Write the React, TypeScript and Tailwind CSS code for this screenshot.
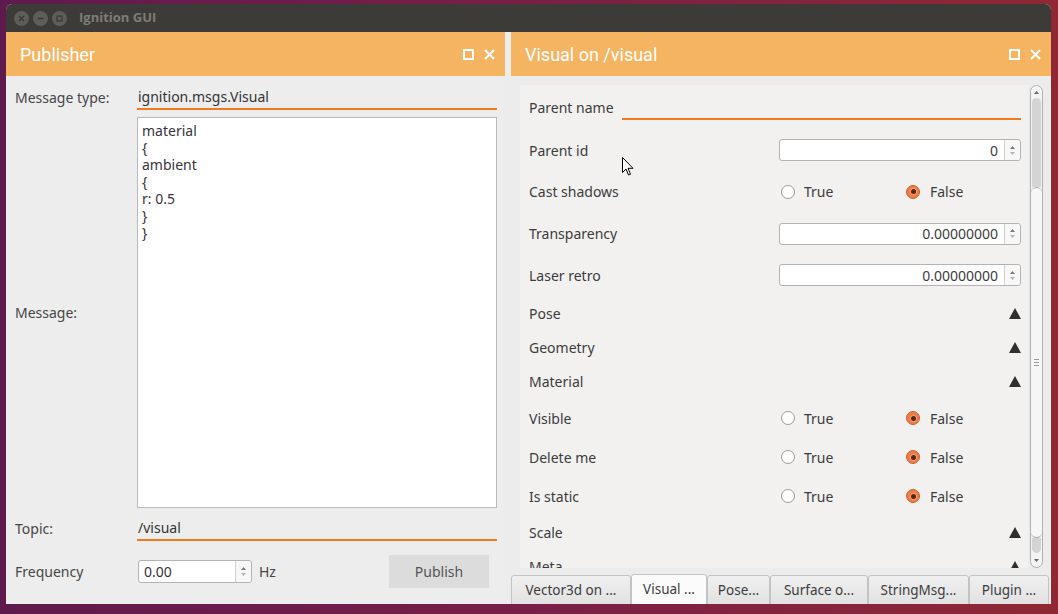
import React from "react";

const ORANGE_LINE = "border-[#f07a1c]";

function SpinArrows({ w = 16 }: { w?: number }) {
  return (
    <div
      className="flex flex-col items-center justify-center gap-[3px] border-l border-[#d0d0d0] h-full bg-[#f7f7f7] rounded-r-[3px]"
      style={{ width: w }}
    >
      <svg width="5" height="3" viewBox="0 0 5 3">
        <path d="M0 3 L2.5 0 L5 3 Z" fill="#7a7a7a" />
      </svg>
      <svg width="5" height="3" viewBox="0 0 5 3">
        <path d="M0 0 L2.5 3 L5 0 Z" fill="#b5b5b5" />
      </svg>
    </div>
  );
}

function SpinBox({ value }: { value: string }) {
  return (
    <div className="flex w-[242px] h-[22px] bg-white border border-[#b3b3b3] rounded-[3px]">
      <div className="flex-1 flex items-center justify-end pr-[6px] text-[14px] text-[#3c3c3c]">
        {value}
      </div>
      <SpinArrows />
    </div>
  );
}

function Radio({ checked }: { checked?: boolean }) {
  if (checked) {
    return (
      <div className="w-[14px] h-[14px] rounded-full bg-[#ef7b47] border border-[#d2622f] flex items-center justify-center">
        <div className="w-[7px] h-[7px] rounded-full bg-[#f5a07a] flex items-center justify-center">
          <div className="w-[5px] h-[5px] rounded-full bg-[#5b2516]" />
        </div>
      </div>
    );
  }
  return <div className="w-[14px] h-[14px] rounded-full bg-white border border-[#9c9c9c]" />;
}

function RadioPair() {
  return (
    <div className="grid grid-cols-[125px_117px] ml-[2px] text-[14px] text-[#3c3c3c]">
      <div className="flex items-center gap-[9px]">
        <Radio />
        <span>True</span>
      </div>
      <div className="flex items-center gap-[10px]">
        <Radio checked />
        <span>False</span>
      </div>
    </div>
  );
}

function Triangle() {
  return (
    <svg width="12" height="11" viewBox="0 0 12 11" className="ml-auto mr-[7px]">
      <path d="M6 0 L12 11 L0 11 Z" fill="#2f2f2f" />
    </svg>
  );
}

function Row({
  h,
  label,
  children,
}: {
  h: number;
  label: string;
  children?: React.ReactNode;
}) {
  return (
    <div className="flex items-center pl-[9px] shrink-0" style={{ height: h }}>
      <div className="w-[250px] shrink-0 text-[14px] text-[#3c3c3c]">{label}</div>
      {children}
    </div>
  );
}

function HeaderIcons() {
  return (
    <div className="flex items-center gap-[10px] ml-auto mr-[10px]">
      <div className="w-[11px] h-[11px] border-2 border-white" />
      <svg width="11" height="11" viewBox="0 0 11 11">
        <path d="M1 1 L10 10 M10 1 L1 10" stroke="white" strokeWidth="2" />
      </svg>
    </div>
  );
}

function TitleButton({ glyph }: { glyph: "x" | "-" | "o" }) {
  return (
    <div className="w-[15px] h-[15px] rounded-full bg-[#5e5d58] flex items-center justify-center">
      <svg width="7" height="7" viewBox="0 0 7 7">
        {glyph === "x" && <path d="M1 1 L6 6 M6 1 L1 6" stroke="#3a3935" strokeWidth="1.4" />}
        {glyph === "-" && <path d="M0.5 3.5 L6.5 3.5" stroke="#3a3935" strokeWidth="1.4" />}
        {glyph === "o" && <rect x="1" y="1" width="5" height="5" fill="none" stroke="#3a3935" strokeWidth="1.2" />}
      </svg>
    </div>
  );
}

function Tab({ w, label, selected }: { w: number; label: string; selected?: boolean }) {
  return (
    <div
      className={
        selected
          ? "h-[31px] -mt-[1px] flex items-center justify-center border border-[#c3c3c3] rounded-t-[3px] bg-[#fbfbfb] text-[13.5px] text-[#3c3c3c]"
          : "h-[30px] flex items-center justify-center border border-[#c3c3c3] rounded-t-[3px] bg-gradient-to-b from-[#f0f0f0] to-[#e2e2e2] text-[13.5px] text-[#3c3c3c]"
      }
      style={{ width: w }}
    >
      {label}
    </div>
  );
}

export default function App() {
  const code = ["material", "{", "ambient", "{", "r: 0.5", "}", "}"];
  return (
    <div className="relative w-[1058px] h-[614px] overflow-hidden bg-gradient-to-r from-[#5f1a4d] via-[#791f46] to-[#8f2834] font-['Noto_Sans',sans-serif]">
      <div className="pt-[4px] pl-[6px]">
        <div className="w-[1045px] h-[600px] flex flex-col bg-[#ececec] rounded-t-[6px] overflow-hidden">
          {/* Title bar */}
          <div className="h-[28px] shrink-0 bg-[#3c3b37] flex items-center pl-[8px]">
            <div className="flex items-center gap-[4px]">
              <TitleButton glyph="x" />
              <TitleButton glyph="-" />
              <TitleButton glyph="o" />
            </div>
            <div className="ml-[12px] text-[13px] font-bold text-[#7f7c77] font-['Open_Sans',sans-serif]">
              Ignition GUI
            </div>
          </div>

          <div className="flex flex-1 gap-[6px]">
            {/* Left panel: Publisher */}
            <div className="w-[499px] flex flex-col">
              <div className="h-[44px] bg-[#f5b462] flex items-center pl-[14px]">
                <span className="text-[18px] text-white font-['Roboto',sans-serif]">Publisher</span>
                <HeaderIcons />
              </div>
              <div className="flex-1 flex flex-col pt-[9px] pl-[9px] pr-[8px] bg-[#ededed]">
                <div className="flex h-[25px]">
                  <div className="w-[122px] flex items-center text-[14px] text-[#464646]">
                    Message type:
                  </div>
                  <div className={`flex-1 flex items-center pl-[1px] border-b-2 ${ORANGE_LINE} text-[14px] text-[#333]`}>
                    ignition.msgs.Visual
                  </div>
                </div>
                <div className="flex mt-[7px] h-[391px]">
                  <div className="w-[122px] flex items-center text-[14px] text-[#464646]">Message:</div>
                  <div className="flex-1 bg-white border border-[#b9b9b9] pt-[4px] pl-[4px] text-[14px] leading-[17px] text-[#38353b]">
                    {code.map((l, i) => (
                      <div key={i}>{l}</div>
                    ))}
                  </div>
                </div>
                <div className="flex mt-[8px] h-[25px]">
                  <div className="w-[122px] flex items-center text-[14px] text-[#464646]">Topic:</div>
                  <div className={`flex-1 flex items-center pl-[1px] border-b-2 ${ORANGE_LINE} text-[14px] text-[#333]`}>
                    /visual
                  </div>
                </div>
                <div className="flex mt-[14px] h-[33px] items-center">
                  <div className="w-[123px] text-[14px] text-[#464646]">Frequency</div>
                  <div className="flex w-[114px] h-[23px] bg-white border border-[#b3b3b3] rounded-[3px]">
                    <div className="flex-1 flex items-center pl-[5px] text-[14px] text-[#333]">0.00</div>
                    <SpinArrows />
                  </div>
                  <span className="ml-[7px] text-[14px] text-[#464646]">Hz</span>
                  <div className="ml-[113px] w-[100px] h-[33px] bg-[#dcdcdc] flex items-center justify-center text-[14px] text-[#555]">
                    Publish
                  </div>
                </div>
              </div>
            </div>

            {/* Right panel */}
            <div className="flex-1 flex flex-col">
              <div className="h-[44px] bg-[#f5b462] flex items-center pl-[14px]">
                <span className="text-[18px] text-white font-['Roboto',sans-serif]">Visual on /visual</span>
                <HeaderIcons />
              </div>
              <div className="flex-1 flex flex-col pt-[9px]">
                <div className="flex h-[483px] pl-[9px]">
                  <div className="w-[508px] bg-[#f2f1f0] flex flex-col overflow-hidden">
                    <Row h={44} label="Parent name">
                      <div className={`-ml-[157px] flex-1 mr-[7px] h-[24px] mt-[2px] border-b-2 ${ORANGE_LINE}`} />
                    </Row>
                    <Row h={42} label="Parent id">
                      <SpinBox value="0" />
                    </Row>
                    <Row h={41} label="Cast shadows">
                      <RadioPair />
                    </Row>
                    <Row h={43} label="Transparency">
                      <SpinBox value="0.00000000" />
                    </Row>
                    <Row h={40} label="Laser retro">
                      <SpinBox value="0.00000000" />
                    </Row>
                    <Row h={36} label="Pose">
                      <Triangle />
                    </Row>
                    <Row h={33} label="Geometry">
                      <Triangle />
                    </Row>
                    <Row h={35} label="Material">
                      <Triangle />
                    </Row>
                    <Row h={38} label="Visible">
                      <RadioPair />
                    </Row>
                    <Row h={40} label="Delete me">
                      <RadioPair />
                    </Row>
                    <Row h={38} label="Is static">
                      <RadioPair />
                    </Row>
                    <Row h={35} label="Scale">
                      <Triangle />
                    </Row>
                    <Row h={33} label="Meta">
                      <Triangle />
                    </Row>
                  </div>
                  {/* Scrollbar */}
                  <div className="ml-[2px] w-[13px] h-[483px] rounded-[7px] border border-[#b0b0b0] bg-[#f4f4f4] flex flex-col overflow-hidden">
                    <div className="h-[12px] shrink-0 flex items-center justify-center">
                      <svg width="5" height="3" viewBox="0 0 5 3">
                        <path d="M0 3 L2.5 0 L5 3 Z" fill="#666" />
                      </svg>
                    </div>
                    <div className="h-[89px] shrink-0 bg-[#d4d4d4] rounded-t-[5px] mx-[1px]" />
                    <div className="h-[351px] shrink-0 bg-[#f6f6f6] border-y border-[#a8a8a8] rounded-[6px] flex items-center justify-center">
                      <div className="flex flex-col gap-[2px]">
                        <div className="w-[5px] h-[1px] bg-[#999]" />
                        <div className="w-[5px] h-[1px] bg-[#999]" />
                        <div className="w-[5px] h-[1px] bg-[#999]" />
                      </div>
                    </div>
                    <div className="h-[15px] shrink-0 bg-[#d4d4d4] rounded-b-[5px] mx-[1px]" />
                    <div className="flex-1 flex items-center justify-center">
                      <svg width="5" height="3" viewBox="0 0 5 3">
                        <path d="M0 0 L2.5 3 L5 0 Z" fill="#666" />
                      </svg>
                    </div>
                  </div>
                </div>
                <div className="mt-[7px] flex">
                  <Tab w={120} label="Vector3d on ..." />
                  <Tab w={76} label="Visual ..." selected />
                  <Tab w={63} label="Pose..." />
                  <Tab w={98} label="Surface o..." />
                  <Tab w={101} label="StringMsg..." />
                  <Tab w={80} label="Plugin ..." />
                </div>
              </div>
            </div>
          </div>
        </div>
      </div>

      {/* Mouse cursor */}
      <svg
        className="absolute left-[622px] top-[157px]"
        width="12"
        height="19"
        viewBox="0 0 12 19"
      >
        <path
          d="M0.5 0.5 L0.5 15.5 L4 12 L6.5 18 L8.5 17.2 L6 11.3 L11 11.3 Z"
          fill="white"
          stroke="black"
          strokeWidth="1"
          strokeLinejoin="round"
        />
      </svg>
    </div>
  );
}
